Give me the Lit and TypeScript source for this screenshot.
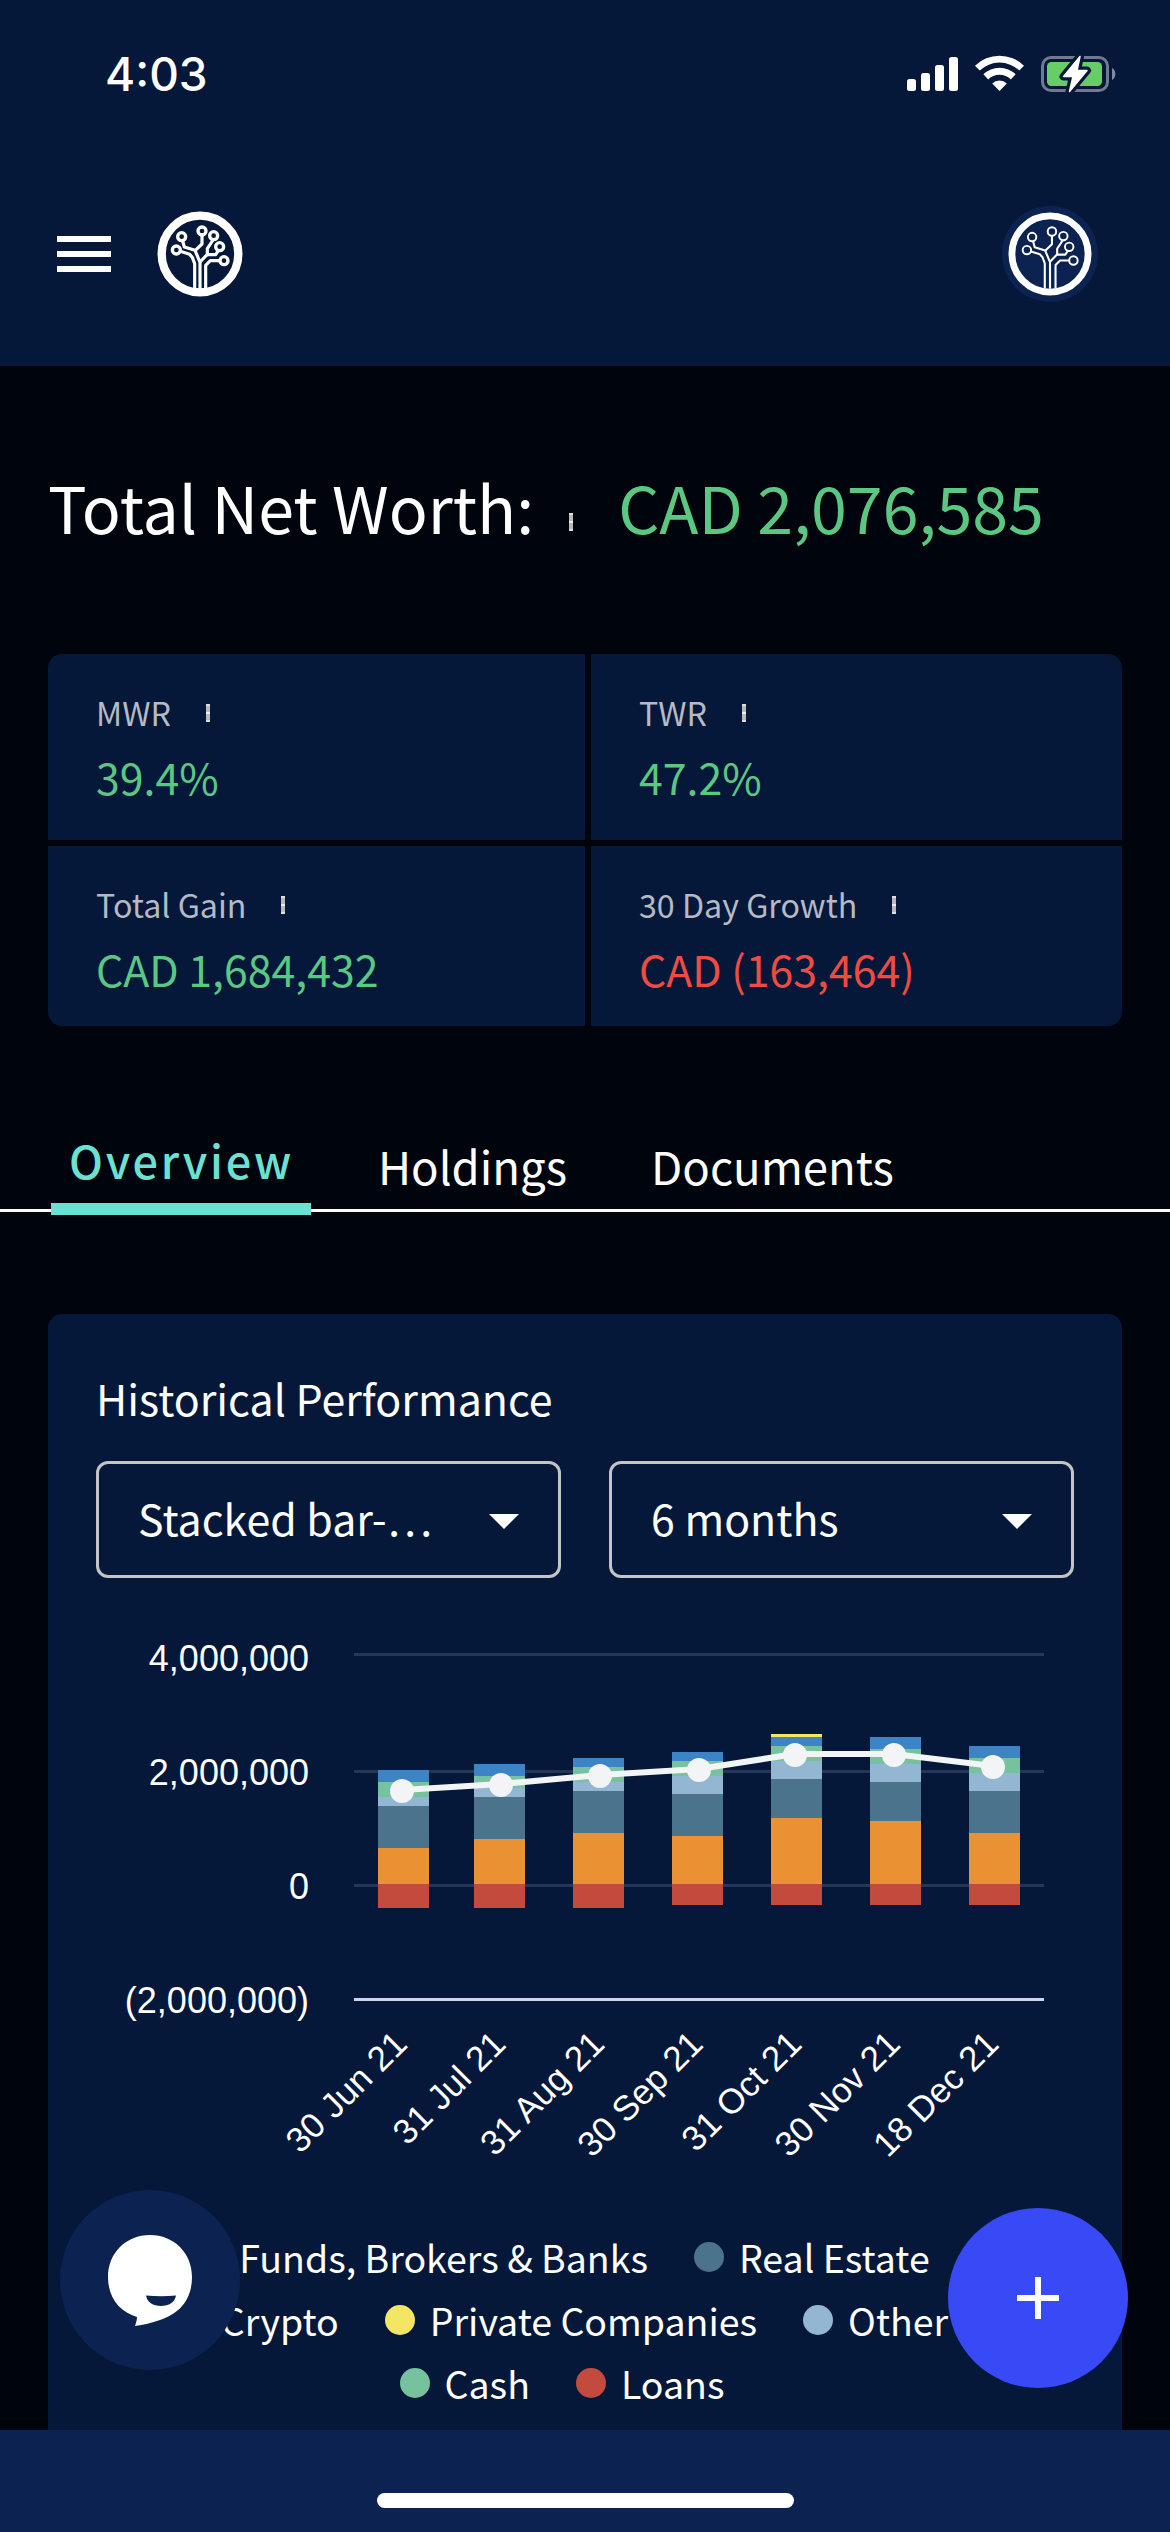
import { LitElement, html, svg, css } from "lit";
import { customElement, property } from "lit/decorators.js";

interface Bar {
  label: string;
  x: number;
  tops: number[];
  end: number;
  dot: [number, number];
  crest?: number;
}

const SEGMENT_CLASSES = ["blue", "green", "sky", "teal", "orange", "red"];

/* Coordinates inside the 1074 x 570 chart canvas. */
const BARS: Bar[] = [
  { label: "30 Jun 21", x: 330, tops: [150, 162, 177, 186, 228, 264], end: 288, dot: [354, 171] },
  { label: "31 Jul 21", x: 426, tops: [144, 156, 168, 177, 219, 264], end: 288, dot: [453, 165] },
  { label: "31 Aug 21", x: 525, tops: [138, 147, 162, 171, 213, 264], end: 288, dot: [552, 156] },
  { label: "30 Sep 21", x: 624, tops: [132, 141, 156, 174, 216, 264], end: 285, dot: [651, 150] },
  { label: "31 Oct 21", x: 723, tops: [117, 126, 141, 159, 198, 264], end: 285, dot: [747, 135], crest: 114 },
  { label: "30 Nov 21", x: 822, tops: [117, 129, 144, 162, 201, 264], end: 285, dot: [846, 135] },
  { label: "18 Dec 21", x: 921, tops: [126, 138, 153, 171, 213, 264], end: 285, dot: [945, 147] },
];

const Y_AXIS = [
  { label: "4,000,000", y: 33, cls: "grid" },
  { label: "2,000,000", y: 150, cls: "grid" },
  { label: "0", y: 264, cls: "grid" },
  { label: "(2,000,000)", y: 378, cls: "axis" },
];

@customElement("tree-logo")
export class TreeLogo extends LitElement {
  @property({ type: Boolean, reflect: true }) thin = false;

  static styles = css`
    :host { display: block; width: 86px; height: 86px; }
    svg { display: block; width: 100%; height: 100%; }
    .line { fill: none; stroke: #fff; stroke-width: 9.5; stroke-linejoin: round; }
    .node { fill: none; stroke: #fff; stroke-width: 10; }
    .ring { fill: none; stroke: #fff; stroke-width: 25; }
    :host([thin]) .line { stroke-width: 6.4; }
    :host([thin]) .node { stroke-width: 6; }
    :host([thin]) .ring { stroke-width: 21; }
  `;

  render() {
    const nodes = [[126, 141], [110, 181], [187, 124], [222, 138], [240, 171], [253, 213]];
    const r = this.thin ? 13 : 12;
    return html`<svg viewBox="52 64 258 258">
      <circle class="ring" cx="181" cy="193" r=${this.thin ? 117 : 115}></circle>
      ${nodes.map(([x, y]) => svg`<circle class="node" cx=${x} cy=${y} r=${r}></circle>`)}
      <path class="line" d="M129 154L134 172L166 182L181 218V300"></path>
      <path class="line" d="M187 137V163L167 182"></path>
      <path class="line" d="M122 185L150 194L158 203L165 222V298"></path>
      <path class="line" d="M240 213H212L198 227V298"></path>
      <path class="line" d="M220 151L203 177V194L181 217"></path>
      <path class="line" d="M236 183L228 195H202"></path>
    </svg>`;
  }
}

@customElement("stat-card")
export class StatCard extends LitElement {
  @property() label = "";
  @property() value = "";
  @property({ type: Boolean, reflect: true }) negative = false;

  static styles = css`
    :host { display: block; background: #061839; padding: 34px 0 0 48px; box-sizing: border-box; }
    .label { display: flex; align-items: center; gap: 35px; height: 48px; font-size: 32.2px; line-height: 48px; color: #b5bac4; }
    .tick { width: 4px; height: 18px; background: linear-gradient(#ddd 0 2px, #b9b9b9 2px 8px, #eee 8px 10px, #b9b9b9 10px 16px, #ddd 16px); margin-top: 1px; }
    .value { margin-top: 10px; font-size: 42.8px; line-height: 60px; color: #5ac783; }
    :host([negative]) .value { color: #ee4c42; }
  `;

  render() {
    return html`
      <div class="label"><span>${this.label}</span><i class="tick"></i></div>
      <div class="value">${this.value}</div>
    `;
  }
}

@customElement("performance-chart")
export class PerformanceChart extends LitElement {
  static styles = css`
    :host { display: block; }
    svg { display: block; width: 1074px; height: 570px; }
    text { font-family: "Liberation Sans", Arial, sans-serif; font-size: 36px; fill: #fff; text-anchor: end; }
    .grid { fill: #263659; }
    .axis { fill: #ccd6eb; }
    .blue { fill: #3c84c6; }
    .green { fill: #76c29f; }
    .sky { fill: #93b7d3; }
    .teal { fill: #4b738c; }
    .orange { fill: #ea9134; }
    .red { fill: #c34b3e; }
    .yellow { fill: #f2e663; }
    .line { fill: none; stroke: #f3f4f6; stroke-width: 6; stroke-linejoin: round; }
    .dot { fill: #f3f4f6; }
    .date { font-size: 35px; }
  `;

  render() {
    return html`<svg viewBox="0 0 1074 570">
      ${Y_AXIS.map((t) => svg`
        <rect class=${t.cls} x="306" y=${t.y} width="690" height="3"></rect>
        <text x="261" y=${t.label === "4,000,000" ? 51 : t.y + 15}>${t.label}</text>`)}
      ${BARS.map((b) => svg`
        ${b.tops.map((top, i) => svg`<rect class=${SEGMENT_CLASSES[i]} x=${b.x} y=${top} width="51"
          height=${(b.tops[i + 1] ?? b.end) - top}></rect>`)}
        ${b.crest ? svg`<rect class="yellow" x=${b.x} y=${b.crest} width="51" height="3"></rect>` : null}`)}
      <polyline class="line" points=${BARS.map((b) => `${b.dot[0]},${b.dot[1] - 1}`).join(" ")}></polyline>
      ${BARS.map((b) => svg`<circle class="dot" cx=${b.dot[0]} cy=${b.dot[1]} r="12"></circle>`)}
      ${BARS.map((b, i) => svg`<text class="date" transform="translate(${361 + i * 98.6} 426) rotate(-45)">${b.label}</text>`)}
    </svg>`;
  }
}

@customElement("app-root")
export class AppRoot extends LitElement {
  static styles = css`
    :host {
      display: flex; flex-direction: column; position: relative;
      width: 1170px; height: 2532px; overflow: hidden;
      background: #00040c; color: #fff;
      font-family: "Noto Sans CJK JP", "Noto Sans", sans-serif;
    }
    .top { height: 366px; background: #061839; flex: none; }
    .status { display: flex; justify-content: space-between; height: 146px; padding: 0 54px 0 105px; }
    .time { font: 500 46px/60px Inter, sans-serif; padding-top: 44px; }
    .indicators { display: flex; gap: 16px; padding-top: 55px; }
    .indicators svg { display: block; }
    .bar { display: flex; align-items: center; height: 216px; padding: 0 72px 0 57px; }
    .burger { display: grid; gap: 9px; width: 54px; margin-right: 46px; }
    .burger i { height: 6px; background: #fff; }
    .avatar { display: flex; align-items: center; justify-content: center; width: 96px; height: 96px; border-radius: 50%; background: #0c2352; margin-left: auto; }
    .avatar tree-logo { width: 84px; height: 84px; }

    .worth { display: flex; height: 96px; margin: 92px 48px 0; font-size: 64.5px; line-height: 96px; flex: none; }
    .tick { width: 4px; height: 18px; margin: 55px 45px 0 35px; background: linear-gradient(#ddd 0 2px, #b9b9b9 2px 8px, #eee 8px 10px, #b9b9b9 10px 16px, #ddd 16px); }
    .amount { color: #5ac783; }

    .stats { display: grid; grid-template-columns: 537px 531px; grid-template-rows: 186px 180px; gap: 6px; margin: 100px 48px 0; border-radius: 14px; overflow: hidden; flex: none; }

    .tabs { display: flex; height: 82px; margin-top: 104px; padding-left: 51px; border-bottom: 3px solid #fff; box-sizing: border-box; font-size: 45.5px; line-height: 60px; flex: none; }
    .tab { margin-top: 5px; white-space: nowrap; }
    .active { width: 242px; height: 73px; padding-left: 18px; margin: 0 67px 0 0; border-bottom: 12px solid #6ae1d1; color: #6ae1d1; font-size: 45px; font-weight: 500; letter-spacing: 2.7px; }
    .holdings { width: 273px; }

    .panel { flex: 1; margin: 102px 48px 0; background: #061839; border-radius: 14px 14px 0 0; min-height: 0; }
    .heading { padding: 53px 0 0 48px; font-size: 42.9px; line-height: 60px; }
    .selects { display: flex; gap: 48px; padding: 34px 48px 0; }
    .select { display: flex; align-items: center; justify-content: space-between; width: 465px; height: 117px; padding: 0 39px 0 39px; border: 3px solid #c4c4c4; border-radius: 12px; box-sizing: border-box; font-size: 42.9px; }
    .select span { position: relative; top: -3px; }
    .caret { border: 15px solid transparent; border-top-color: #fff; border-bottom: 0; margin-top: 3px; }
    .chart { margin-top: 42px; }

    .legend { display: flex; flex-wrap: wrap; justify-content: center; padding: 35px 120px 0; }
    .item { display: flex; align-items: center; gap: 15px; height: 63px; margin-right: 46px; font-size: 37.5px; line-height: 63px; white-space: nowrap; }
    .swatch { width: 30px; height: 30px; border-radius: 50%; }
    .funds { background: #3c84c6; }
    .estate { background: #4b738c; }
    .crypto { background: #ea9134; }
    .private { background: #f2e663; }
    .other { background: #93b7d3; }
    .cash { background: #76c29f; }
    .loans { background: #c34b3e; }

    .bottom { display: flex; justify-content: center; height: 102px; background: #0c2352; flex: none; }
    .home { width: 417px; height: 15px; margin-top: 63px; border-radius: 8px; background: #fff; }

    .chat, .fab { position: absolute; width: 180px; height: 180px; border-radius: 50%; }
    .chat { left: 60px; top: 2190px; background: #0c2352; }
    .fab { left: 948px; top: 2208px; background: #384af6; }
  `;

  private legendItem(cls: string, label: string) {
    return html`<div class="item"><i class="swatch ${cls}"></i><span>${label}</span></div>`;
  }

  render() {
    return html`
      <header class="top">
        <div class="status">
          <div class="time">4:03</div>
          <div class="indicators">
            <svg width="52" height="38" viewBox="0 0 52 38" fill="#fff">
              <rect x="0" y="24" width="9" height="12" rx="2.5"></rect>
              <rect x="14" y="18" width="9" height="18" rx="2.5"></rect>
              <rect x="28" y="10" width="9" height="26" rx="2.5"></rect>
              <rect x="42" y="2" width="9" height="34" rx="2.5"></rect>
            </svg>
            <svg width="49" height="38" viewBox="0 0 49 38" fill="#fff">
              <path d="M0 10.7A35 35 0 0 1 49 10.7L44.3 15.6A28.4 28.4 0 0 0 4.7 15.6Z"></path>
              <path d="M8.4 19.3A23 23 0 0 1 40.6 19.3L35.8 24.4A16.2 16.2 0 0 0 13.2 24.4Z"></path>
              <path d="M17.2 28.5A10.6 10.6 0 0 1 31.8 28.5L24.5 36Z"></path>
            </svg>
            <svg width="76" height="38" viewBox="0 0 76 38">
              <rect x="2.5" y="2.5" width="65" height="33" rx="8.5" fill="none" stroke="#707a90" stroke-width="3"></rect>
              <path d="M72 13C76.5 15 76.5 23 72 25Z" fill="#8189a0"></path>
              <rect x="7" y="7" width="55" height="24" rx="4.5" fill="#67ce67"></rect>
              <path d="M40 1.5L23.5 21.5H33L29.5 36.5L47 15.5H37Z" fill="#fff" stroke="#061839" stroke-width="8" stroke-linejoin="round"></path>
              <path d="M40 1.5L23.5 21.5H33L29.5 36.5L47 15.5H37Z" fill="#fff" stroke="#fff" stroke-width="1.5" stroke-linejoin="round"></path>
            </svg>
          </div>
        </div>
        <div class="bar">
          <div class="burger"><i></i><i></i><i></i></div>
          <tree-logo></tree-logo>
          <div class="avatar"><tree-logo thin></tree-logo></div>
        </div>
      </header>

      <div class="worth"><span>Total Net Worth:</span><i class="tick"></i><span class="amount">CAD 2,076,585</span></div>

      <section class="stats">
        <stat-card label="MWR" value="39.4%"></stat-card>
        <stat-card label="TWR" value="47.2%"></stat-card>
        <stat-card label="Total Gain" value="CAD 1,684,432"></stat-card>
        <stat-card label="30 Day Growth" value="CAD (163,464)" negative></stat-card>
      </section>

      <nav class="tabs">
        <div class="tab active">Overview</div>
        <div class="tab holdings">Holdings</div>
        <div class="tab">Documents</div>
      </nav>

      <section class="panel">
        <div class="heading">Historical Performance</div>
        <div class="selects">
          <div class="select"><span>Stacked bar-…</span><i class="caret"></i></div>
          <div class="select"><span>6 months</span><i class="caret"></i></div>
        </div>
        <performance-chart class="chart"></performance-chart>
        <div class="legend">
          ${this.legendItem("funds", "Funds, Brokers & Banks")}
          ${this.legendItem("estate", "Real Estate")}
          ${this.legendItem("crypto", "Crypto")}
          ${this.legendItem("private", "Private Companies")}
          ${this.legendItem("other", "Other")}
          ${this.legendItem("cash", "Cash")}
          ${this.legendItem("loans", "Loans")}
        </div>
      </section>

      <footer class="bottom"><div class="home"></div></footer>

      <svg class="chat" viewBox="0 0 180 180">
        <path d="M90 45C114 45 132 63 132 87C132 111 118 124 100 130C91 133 84 135 75 136C76 133 77 130 77 127C60 122 48 108 48 87C48 63 66 45 90 45Z" fill="#fff"></path>
        <path d="M86 105.500Q101 107 116 105.500C115 112 109 116 101 116S87 112 86 105.500Z" fill="#0c2352"></path>
      </svg>
      <svg class="fab" viewBox="0 0 180 180">
        <path d="M87 69h6v18h18v6h-18v18h-6v-18h-18v-6h18z" fill="#fff"></path>
      </svg>
    `;
  }
}
